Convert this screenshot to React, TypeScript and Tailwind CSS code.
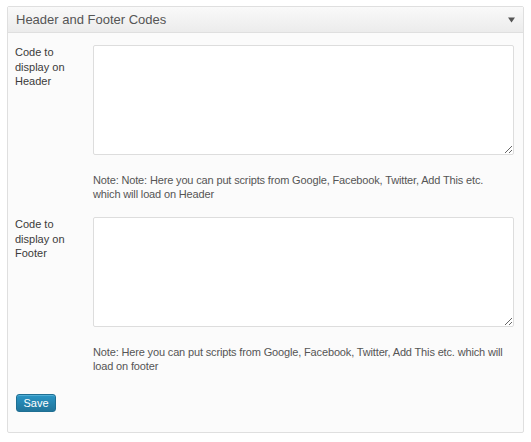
import { useState } from 'react'

function CodeRow({ label, note }: { label: string; note: string }) {
    const [value, setValue] = useState('')

    return (
        <div className="flex">
            <label className="w-[70px] shrink-0 text-[11px] leading-[14.5px] text-[#3a3a3a]">{label}</label>
            <div className="ml-2 flex-1">
                <textarea
                    value={value}
                    onChange={(e) => setValue(e.target.value)}
                    className="block w-full h-[110px] bg-white border border-[#dddddd] rounded-[2px] outline-none text-[11px] p-1"
                />
                <p className="mt-[19px] mr-[5px] text-[11px] leading-[13.5px] tracking-[-0.15px] text-[#555]">{note}</p>
            </div>
        </div>
    )
}

export default function App() {
    return (
        <div className="pt-[6px] px-[7px] font-['Liberation_Sans',Arial,sans-serif]">
            <div className="border border-[#dfdfdf] bg-[#fbfbfb] rounded-[2px]">
                <div className="h-[26px] flex items-center justify-between pl-[8px] pr-[8px] border-b border-[#dfdfdf] bg-gradient-to-b from-[#f9f9f9] to-[#ececec]">
                    <h3 className="text-[13px] text-[#555]">Header and Footer Codes</h3>
                    <svg width="7" height="6" viewBox="0 0 7 6" className="mt-[1px]">
                        <path d="M0 0.5 H7 L3.5 5.5 Z" fill="#555" />
                    </svg>
                </div>

                <div className="pt-[12px] pl-[7px] pr-[9px] pb-[18px]">
                    <div className="flex flex-col gap-[16px]">
                        <CodeRow
                            label="Code to display on Header"
                            note="Note: Note: Here you can put scripts from Google, Facebook, Twitter, Add This etc. which will load on Header"
                        />
                        <CodeRow
                            label="Code to display on Footer"
                            note="Note: Here you can put scripts from Google, Facebook, Twitter, Add This etc. which will load on footer"
                        />
                    </div>

                    <button className="mt-[21px] ml-[1px] h-[18px] w-[40px] text-[11px] text-white rounded-[3px] border border-[#1f6f93] bg-gradient-to-b from-[#2a95c5] to-[#21759b] shadow-[inset_0_1px_0_rgba(120,200,230,0.5)]">
                        Save
                    </button>
                </div>
            </div>
        </div>
    )
}
